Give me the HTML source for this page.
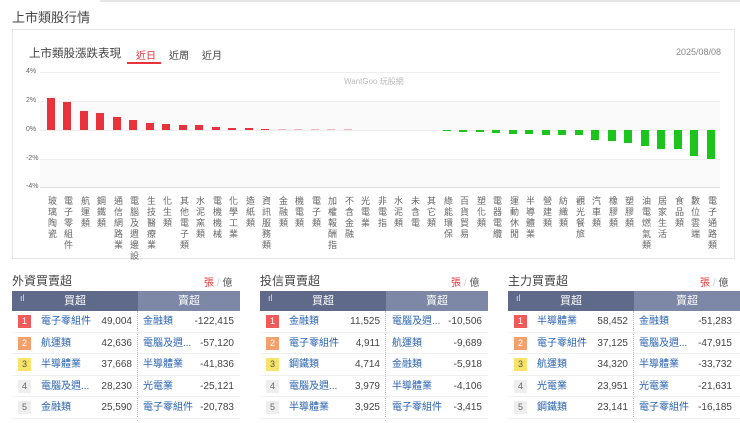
<!DOCTYPE html>
<html><head><meta charset="utf-8"><style>
*{margin:0;padding:0;box-sizing:border-box}
body{width:740px;height:423px;overflow:hidden;background:#fff;font-family:"Liberation Sans","Noto Sans CJK TC",sans-serif;position:relative;color:#333}
.a{position:absolute}
.h1{left:12px;top:7px;font-size:13px;color:#444}
.topline{left:100px;top:0;width:640px;height:2px;background:#e6e6e6}
.card{left:12px;top:29px;width:723px;height:230px;border:1px solid #e6e6e6}
.grid{left:40px;height:1px;width:680px;background:#eee}
.band{left:40px;width:680px;background:#fafafa}
.yl{left:26px;font-size:7px;color:#666}
.b{position:absolute;width:8px}
.r{background:#e8323c}.p{background:#f2b4bb}.g{background:#1ec41e}
.lab{position:absolute;top:196px;writing-mode:vertical-rl;font-size:9px;line-height:9px;letter-spacing:2px;color:#666;width:9px}
.pt{font-size:12px;color:#444}
.unit{font-size:10px;color:#555}
.unit b{font-weight:normal;color:#e8323c;border-bottom:2px solid #e8323c;padding-bottom:2px}
.hd{height:20px;color:#fff;font-size:11px;line-height:20px;text-align:center}
.row{position:absolute;height:21.5px;border-bottom:1px solid #f0f0f0;font-size:10px;line-height:21px}
.rk{position:absolute;top:4px;width:13px;height:13px;font-size:9px;line-height:13px;text-align:center;color:#fff}
.n{position:absolute;color:#2a63b0}
.v{position:absolute;text-align:right;color:#444}
</style></head><body>
<div class="a topline"></div>
<div class="a h1">上市類股行情</div>
<div class="a card"></div>
<div class="a" style="left:29px;top:45px;font-size:11.5px;color:#444">上市類股漲跌表現</div>
<div class="a" style="left:136px;top:47px;font-size:10px;color:#e8323c">近日</div>
<div class="a" style="left:127px;top:62px;width:34px;height:2px;background:#e8323c"></div>
<div class="a" style="left:169px;top:47px;font-size:10px;color:#444">近周</div>
<div class="a" style="left:202px;top:47px;font-size:10px;color:#444">近月</div>
<div class="a" style="left:676px;top:47px;font-size:9px;color:#888">2025/08/08</div>
<div class="a" style="left:344px;top:76px;font-size:8px;color:#bbb">WantGoo 玩股網</div>
<div class="a band" style="top:101px;height:29px"></div>
<div class="a band" style="top:159px;height:28px"></div>
<div class="a grid" style="top:72px"></div><div class="a grid" style="top:101px"></div><div class="a grid" style="top:130px"></div><div class="a grid" style="top:159px"></div><div class="a grid" style="top:187px;background:#ddd"></div>
<div class="a yl" style="top:68px">4%</div><div class="a yl" style="top:97px">2%</div><div class="a yl" style="top:126px">0%</div><div class="a yl" style="top:155px">-2%</div><div class="a yl" style="top:183px">-4%</div>
<div class="b r" style="left:47px;top:98px;height:32px"></div>
<div class="b r" style="left:63px;top:102px;height:28px"></div>
<div class="b r" style="left:80px;top:111px;height:19px"></div>
<div class="b r" style="left:96px;top:113px;height:17px"></div>
<div class="b r" style="left:113px;top:117px;height:13px"></div>
<div class="b r" style="left:129px;top:120px;height:10px"></div>
<div class="b r" style="left:146px;top:123px;height:7px"></div>
<div class="b r" style="left:162px;top:124px;height:6px"></div>
<div class="b r" style="left:179px;top:125px;height:5px"></div>
<div class="b r" style="left:195px;top:125px;height:5px"></div>
<div class="b r" style="left:212px;top:127px;height:3px"></div>
<div class="b r" style="left:228px;top:128px;height:2px"></div>
<div class="b r" style="left:245px;top:128px;height:2px"></div>
<div class="b r" style="left:261px;top:128.5px;height:1.5px"></div>
<div class="b p" style="left:278px;top:129px;height:1px"></div>
<div class="b p" style="left:294px;top:129px;height:1px"></div>
<div class="b p" style="left:311px;top:129px;height:1px"></div>
<div class="b p" style="left:327px;top:129px;height:1px"></div>
<div class="b p" style="left:344px;top:129px;height:1px"></div>
<div class="b g" style="left:443px;top:130px;height:1px"></div>
<div class="b g" style="left:459px;top:130px;height:2px"></div>
<div class="b g" style="left:476px;top:130px;height:2px"></div>
<div class="b g" style="left:492px;top:130px;height:3px"></div>
<div class="b g" style="left:509px;top:130px;height:4px"></div>
<div class="b g" style="left:525px;top:130px;height:4px"></div>
<div class="b g" style="left:542px;top:130px;height:5px"></div>
<div class="b g" style="left:558px;top:130px;height:5px"></div>
<div class="b g" style="left:575px;top:130px;height:5px"></div>
<div class="b g" style="left:591px;top:130px;height:10px"></div>
<div class="b g" style="left:608px;top:130px;height:11px"></div>
<div class="b g" style="left:624px;top:130px;height:13px"></div>
<div class="b g" style="left:641px;top:130px;height:16px"></div>
<div class="b g" style="left:657px;top:130px;height:19px"></div>
<div class="b g" style="left:674px;top:130px;height:19px"></div>
<div class="b g" style="left:690px;top:130px;height:26px"></div>
<div class="b g" style="left:707px;top:130px;height:29px"></div>
<div class="lab" style="left:47px">玻璃陶瓷</div>
<div class="lab" style="left:63px">電子零組件</div>
<div class="lab" style="left:80px">航運類</div>
<div class="lab" style="left:96px">鋼鐵類</div>
<div class="lab" style="left:113px">通信網路業</div>
<div class="lab" style="left:129px">電腦及週邊設</div>
<div class="lab" style="left:146px">生技醫療業</div>
<div class="lab" style="left:162px">化生類</div>
<div class="lab" style="left:179px">其他電子類</div>
<div class="lab" style="left:195px">水泥窯類</div>
<div class="lab" style="left:212px">電機機械</div>
<div class="lab" style="left:228px">化學工業</div>
<div class="lab" style="left:245px">造紙類</div>
<div class="lab" style="left:261px">資訊服務類</div>
<div class="lab" style="left:278px">金融類</div>
<div class="lab" style="left:294px">機電類</div>
<div class="lab" style="left:311px">電子類</div>
<div class="lab" style="left:327px">加權報酬指</div>
<div class="lab" style="left:344px">不含金融</div>
<div class="lab" style="left:360px">光電業</div>
<div class="lab" style="left:377px">非電指</div>
<div class="lab" style="left:393px">水泥類</div>
<div class="lab" style="left:410px">未含電</div>
<div class="lab" style="left:426px">其它類</div>
<div class="lab" style="left:443px">綠能環保</div>
<div class="lab" style="left:459px">百貨貿易</div>
<div class="lab" style="left:476px">塑化類</div>
<div class="lab" style="left:492px">電器電纜</div>
<div class="lab" style="left:509px">運動休閒</div>
<div class="lab" style="left:525px">半導體業</div>
<div class="lab" style="left:542px">營建類</div>
<div class="lab" style="left:558px">紡織類</div>
<div class="lab" style="left:575px">觀光餐旅</div>
<div class="lab" style="left:591px">汽車類</div>
<div class="lab" style="left:608px">橡膠類</div>
<div class="lab" style="left:624px">塑膠類</div>
<div class="lab" style="left:641px">油電燃氣類</div>
<div class="lab" style="left:657px">居家生活</div>
<div class="lab" style="left:674px">食品類</div>
<div class="lab" style="left:690px">數位雲端</div>
<div class="lab" style="left:707px">電子通路類</div>

<div class="a pt" style="left:12px;top:272px">外資買賣超</div>
<div class="a unit" style="left:204px;top:274px"><b>張</b> <span style="color:#ccc">/</span> 億</div>
<div class="a hd" style="left:12px;top:291px;width:126px;background:#5f6a8a">買超</div>
<div class="a hd" style="left:138px;top:291px;width:102px;background:#7d87a6">賣超</div>
<div class="a" style="left:20px;top:293px;font-size:9px;color:#dde">ıl</div>
<div class="a" style="left:137px;top:311px;height:110px;border-left:1px dotted #bbb"></div>

<div class="a pt" style="left:260px;top:272px">投信買賣超</div>
<div class="a unit" style="left:451px;top:274px"><b>張</b> <span style="color:#ccc">/</span> 億</div>
<div class="a hd" style="left:260px;top:291px;width:126px;background:#5f6a8a">買超</div>
<div class="a hd" style="left:386px;top:291px;width:102px;background:#7d87a6">賣超</div>
<div class="a" style="left:268px;top:293px;font-size:9px;color:#dde">ıl</div>
<div class="a" style="left:385px;top:311px;height:110px;border-left:1px dotted #bbb"></div>

<div class="a pt" style="left:508px;top:272px">主力買賣超</div>
<div class="a unit" style="left:700px;top:274px"><b>張</b> <span style="color:#ccc">/</span> 億</div>
<div class="a hd" style="left:508px;top:291px;width:126px;background:#5f6a8a">買超</div>
<div class="a hd" style="left:634px;top:291px;width:106px;background:#7d87a6">賣超</div>
<div class="a" style="left:516px;top:293px;font-size:9px;color:#dde">ıl</div>
<div class="a" style="left:633px;top:311px;height:110px;border-left:1px dotted #bbb"></div>

<div class="row" style="left:12px;top:311px;width:228px"><span class="rk" style="left:6px;background:#f05a5a">1</span><span class="n" style="left:29px">電子零組件</span><span class="v" style="right:108px">49,004</span><span class="n" style="left:131px">金融類</span><span class="v" style="right:6px">-122,415</span></div>
<div class="row" style="left:12px;top:332.5px;width:228px"><span class="rk" style="left:6px;background:#f5a06a">2</span><span class="n" style="left:29px">航運類</span><span class="v" style="right:108px">42,636</span><span class="n" style="left:131px">電腦及週...</span><span class="v" style="right:6px">-57,120</span></div>
<div class="row" style="left:12px;top:354px;width:228px"><span class="rk" style="left:6px;background:#f8e46a;color:#555">3</span><span class="n" style="left:29px">半導體業</span><span class="v" style="right:108px">37,668</span><span class="n" style="left:131px">半導體業</span><span class="v" style="right:6px">-41,836</span></div>
<div class="row" style="left:12px;top:375.5px;width:228px"><span class="rk" style="left:6px;background:#eee;color:#666">4</span><span class="n" style="left:29px">電腦及週...</span><span class="v" style="right:108px">28,230</span><span class="n" style="left:131px">光電業</span><span class="v" style="right:6px">-25,121</span></div>
<div class="row" style="left:12px;top:397px;width:228px"><span class="rk" style="left:6px;background:#eee;color:#666">5</span><span class="n" style="left:29px">金融類</span><span class="v" style="right:108px">25,590</span><span class="n" style="left:131px">電子零組件</span><span class="v" style="right:6px">-20,783</span></div>

<div class="row" style="left:260px;top:311px;width:228px"><span class="rk" style="left:6px;background:#f05a5a">1</span><span class="n" style="left:29px">金融類</span><span class="v" style="right:108px">11,525</span><span class="n" style="left:132px">電腦及週...</span><span class="v" style="right:6px">-10,506</span></div>
<div class="row" style="left:260px;top:332.5px;width:228px"><span class="rk" style="left:6px;background:#f5a06a">2</span><span class="n" style="left:29px">電子零組件</span><span class="v" style="right:108px">4,911</span><span class="n" style="left:132px">航運類</span><span class="v" style="right:6px">-9,689</span></div>
<div class="row" style="left:260px;top:354px;width:228px"><span class="rk" style="left:6px;background:#f8e46a;color:#555">3</span><span class="n" style="left:29px">鋼鐵類</span><span class="v" style="right:108px">4,714</span><span class="n" style="left:132px">金融類</span><span class="v" style="right:6px">-5,918</span></div>
<div class="row" style="left:260px;top:375.5px;width:228px"><span class="rk" style="left:6px;background:#eee;color:#666">4</span><span class="n" style="left:29px">電腦及週...</span><span class="v" style="right:108px">3,979</span><span class="n" style="left:132px">半導體業</span><span class="v" style="right:6px">-4,106</span></div>
<div class="row" style="left:260px;top:397px;width:228px"><span class="rk" style="left:6px;background:#eee;color:#666">5</span><span class="n" style="left:29px">半導體業</span><span class="v" style="right:108px">3,925</span><span class="n" style="left:132px">電子零組件</span><span class="v" style="right:6px">-3,415</span></div>

<div class="row" style="left:508px;top:311px;width:232px"><span class="rk" style="left:6px;background:#f05a5a">1</span><span class="n" style="left:29px">半導體業</span><span class="v" style="right:112px">58,452</span><span class="n" style="left:131px">金融類</span><span class="v" style="right:8px">-51,283</span></div>
<div class="row" style="left:508px;top:332.5px;width:232px"><span class="rk" style="left:6px;background:#f5a06a">2</span><span class="n" style="left:29px">電子零組件</span><span class="v" style="right:112px">37,125</span><span class="n" style="left:131px">電腦及週...</span><span class="v" style="right:8px">-47,915</span></div>
<div class="row" style="left:508px;top:354px;width:232px"><span class="rk" style="left:6px;background:#f8e46a;color:#555">3</span><span class="n" style="left:29px">航運類</span><span class="v" style="right:112px">34,320</span><span class="n" style="left:131px">半導體業</span><span class="v" style="right:8px">-33,732</span></div>
<div class="row" style="left:508px;top:375.5px;width:232px"><span class="rk" style="left:6px;background:#eee;color:#666">4</span><span class="n" style="left:29px">光電業</span><span class="v" style="right:112px">23,951</span><span class="n" style="left:131px">光電業</span><span class="v" style="right:8px">-21,631</span></div>
<div class="row" style="left:508px;top:397px;width:232px"><span class="rk" style="left:6px;background:#eee;color:#666">5</span><span class="n" style="left:29px">鋼鐵類</span><span class="v" style="right:112px">23,141</span><span class="n" style="left:131px">電子零組件</span><span class="v" style="right:8px">-16,185</span></div>
</body></html>
